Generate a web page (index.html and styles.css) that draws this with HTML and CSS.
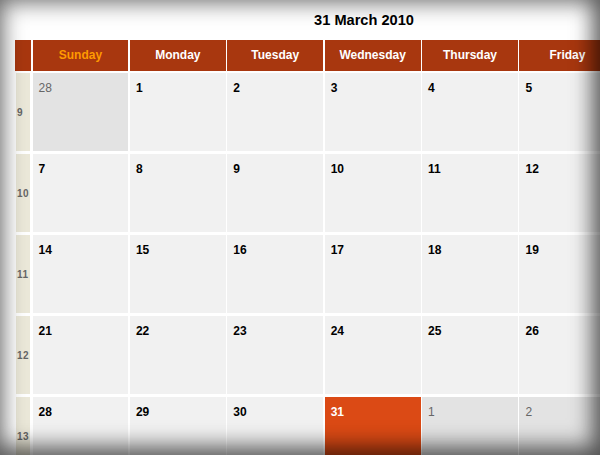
FILE: index.html
```html
<!DOCTYPE html>
<html>
<head>
<meta charset="utf-8">
<link rel="stylesheet" href="styles.css">
</head>
<body>
<div class="page">
  <div class="cal">
    <div class="title">31 March 2010</div>
    <div class="head">
      <div class="hcell wk"></div>
      <div class="hcell sun">Sunday</div>
      <div class="hcell">Monday</div>
      <div class="hcell">Tuesday</div>
      <div class="hcell">Wednesday</div>
      <div class="hcell">Thursday</div>
      <div class="hcell">Friday</div>
    </div>
    <div class="body">
      <div class="wcell"><span>9</span></div>
      <div class="day other">28</div><div class="day">1</div><div class="day">2</div><div class="day">3</div><div class="day">4</div><div class="day">5</div>
      <div class="wcell"><span>10</span></div>
      <div class="day">7</div><div class="day">8</div><div class="day">9</div><div class="day">10</div><div class="day">11</div><div class="day">12</div>
      <div class="wcell"><span>11</span></div>
      <div class="day">14</div><div class="day">15</div><div class="day">16</div><div class="day">17</div><div class="day">18</div><div class="day">19</div>
      <div class="wcell"><span>12</span></div>
      <div class="day">21</div><div class="day">22</div><div class="day">23</div><div class="day">24</div><div class="day">25</div><div class="day">26</div>
      <div class="wcell"><span>13</span></div>
      <div class="day">28</div><div class="day">29</div><div class="day">30</div><div class="day today">31</div><div class="day other">1</div><div class="day other">2</div>
    </div>
  </div>
  <div class="vignette"></div>
</div>
</body>
</html>
```
FILE: styles.css
```css
html, body {
  margin: 0;
  padding: 0;
  background: #fff;
}
body {
  font-family: "Liberation Sans", Arial, sans-serif;
}
.page {
  position: relative;
  width: 600px;
  height: 455px;
  overflow: hidden;
  background: #fff;
}
.cal {
  width: 698px;
  margin-left: 15px;
}
.title {
  height: 40px;
  box-sizing: border-box;
  padding-top: 12px;
  text-align: center;
  font-size: 14.6px;
  font-weight: bold;
  color: #000;
  line-height: 16px;
}
.head {
  display: grid;
  grid-template-columns: 16px repeat(6, 95.9px);
  column-gap: 1.5px;
  height: 31px;
}
.hcell {
  background: #a8370f;
  color: #fff;
  font-size: 12px;
  font-weight: bold;
  text-align: center;
  line-height: 31px;
}
.hcell.sun {
  color: #ff9a00;
}
.body {
  display: grid;
  grid-template-columns: 16px repeat(6, 95.9px);
  column-gap: 1.5px;
  row-gap: 3px;
  grid-auto-rows: 78px;
  margin-top: 2px;
}
.wcell {
  background: #ebe8d9;
  margin: 0 1px 0 1px;
  display: flex;
  align-items: center;
}
.wcell span {
  font-size: 10px;
  font-weight: bold;
  color: #666;
  padding-left: 1px;
  letter-spacing: 0.5px;
}
.day {
  background: #f1f1f1;
  font-size: 12px;
  font-weight: bold;
  color: #000;
  padding: 8px 0 0 6px;
  line-height: 14px;
}
.day.other {
  background: #e3e3e3;
  color: #666;
  font-weight: normal;
}
.day.today {
  background: #db4a15;
  color: #fff;
}
.vignette {
  position: absolute;
  inset: 0;
  pointer-events: none;
  box-shadow: inset 0 0 22px 3px rgba(0,0,0,0.5), inset -8px -10px 22px rgba(0,0,0,0.35);
}
```
